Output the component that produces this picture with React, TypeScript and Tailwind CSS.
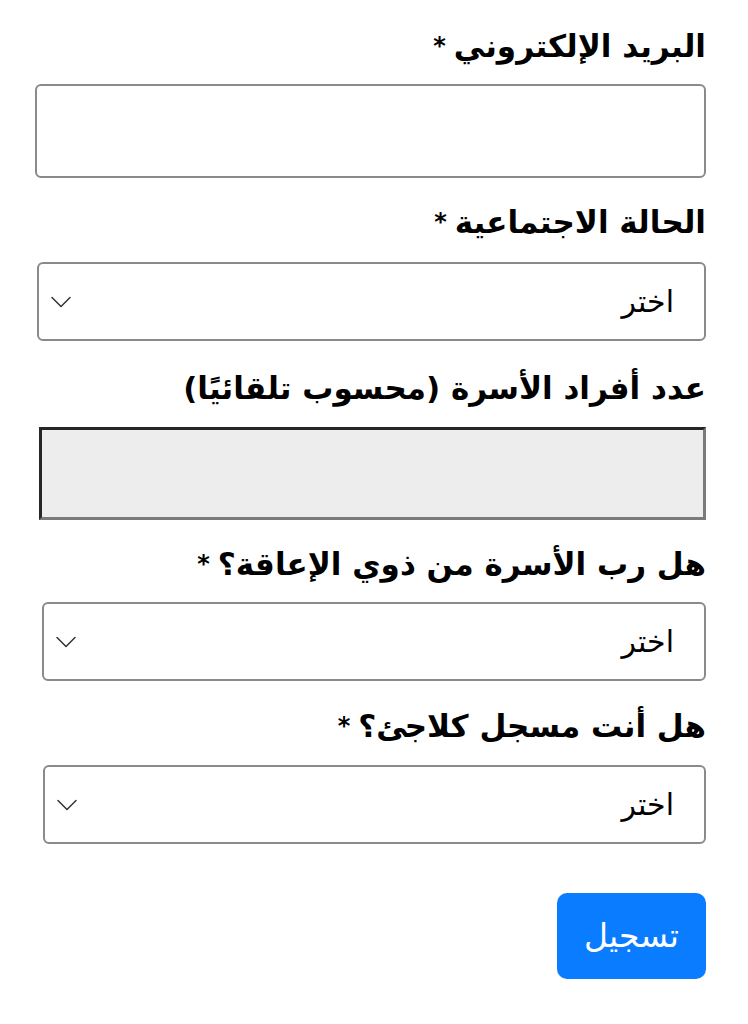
import { ChevronDown } from "lucide-react";

const font = { fontFamily: '"DejaVu Sans", "Noto Sans", sans-serif' };

export default function App() {
  return (
    <div dir="rtl" className="min-h-screen w-[748px] bg-white text-black" style={font}>
      <form className="flex flex-col pr-[42px] pt-[26px]">
        <Label text="البريد الإلكتروني" required />
        <input type="email" className="mt-[18px] ml-[35px] h-[94px] rounded-[6px] border-2 border-[#8a8a8a] bg-white" />

        <Label text="الحالة الاجتماعية" required className="mt-[24px]" />
        <Select className="mt-[20px] ml-[37px]" />

        <Label text="عدد أفراد الأسرة (محسوب تلقائيًا)" className="mt-[27px]" />
        <div className="mt-[19px] ml-[39px] h-[93px] border-[3px] border-t-[#262626] border-l-[#262626] border-r-[#7a7a7a] border-b-[#7a7a7a] bg-[#ededed]" />

        <Label text="هل رب الأسرة من ذوي الإعاقة؟" required className="mt-[24px]" />
        <Select className="mt-[18px] ml-[42px]" />

        <Label text="هل أنت مسجل كلاجئ؟" required className="mt-[25px]" />
        <Select className="mt-[19px] ml-[43px]" />

        <div className="mt-[49px] flex">
          <button
            type="button"
            className="flex h-[86px] w-[149px] items-center justify-center rounded-[10px] bg-[#0a7cff] text-[33px] text-white"
          >
            تسجيل
          </button>
        </div>
      </form>
    </div>
  );
}

function Label({ text, required, className = "" }: { text: string; required?: boolean; className?: string }) {
  return (
    <label className={`block text-[31px] font-bold leading-[40px] ${className}`}>
      {text}
      {required && <span className="mr-[8px] align-top text-[24px]">*</span>}
    </label>
  );
}

function Select({ className = "" }: { className?: string }) {
  return (
    <div
      className={`flex h-[79px] items-center justify-between rounded-[6px] border-2 border-[#8a8a8a] bg-white pr-[30px] pl-[4px] ${className}`}
    >
      <span className="text-[30px]">اختر</span>
      <ChevronDown className="h-[36px] w-[36px] text-[#333]" strokeWidth={1} />
    </div>
  );
}
